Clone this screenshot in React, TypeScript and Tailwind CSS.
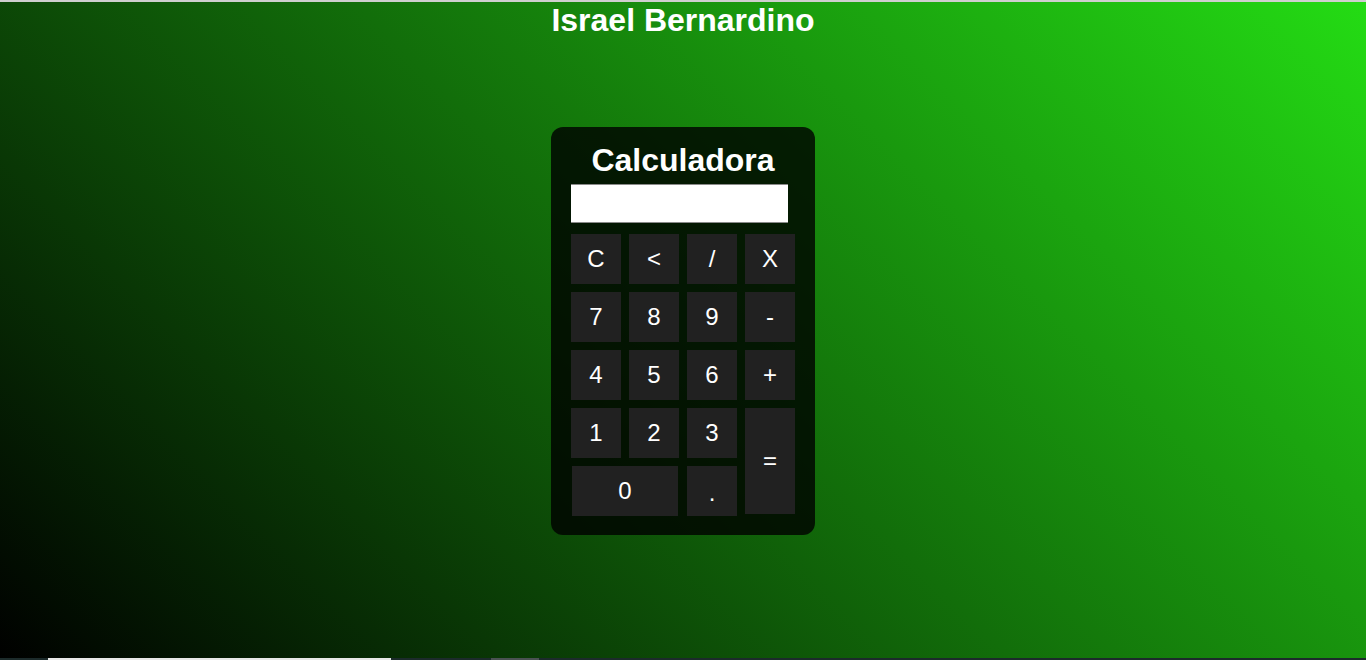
import React from "react";

const btn =
  "bg-[#212121] text-white text-[24px] flex items-center justify-center leading-none select-none";

export default function App() {
  const rows: string[][] = [
    ["C", "<", "/", "X"],
    ["7", "8", "9", "-"],
    ["4", "5", "6", "+"],
  ];
  return (
    <div
      className="w-full h-[660px] flex flex-col overflow-hidden bg-[linear-gradient(45deg,#000000,#24dc14)]"
      style={{ fontFamily: '"Liberation Sans", Arial, sans-serif' }}
    >
      <div className="h-[2px] bg-[#cfcfcf] shrink-0" />
      <div className="flex-1 flex flex-col items-center">
        <h1 className="text-[32px] font-bold text-white leading-[37px] m-0">
          Israel Bernardino
        </h1>
        <div className="mt-[88px] w-[264px] h-[408px] bg-black/80 rounded-[12px] flex flex-col pt-[15px] px-[20px]">
          <h2 className="text-[32px] font-bold text-white leading-[37px] text-center m-0">
            Calculadora
          </h2>
          <div className="mt-[5px] w-[217px] h-[39px] bg-white border-t border-b border-[#8a8a8a]" />
          <div className="mt-[11px] grid grid-cols-[50px_50px_50px_50px] auto-rows-[50px] gap-[8px]">
            {rows.map((r) =>
              r.map((k) => (
                <div key={k} className={btn}>
                  {k}
                </div>
              ))
            )}
            <div className={btn}>1</div>
            <div className={btn}>2</div>
            <div className={btn}>3</div>
            <div className={`${btn} row-span-2 h-[106px]`}>=</div>
            <div className={`${btn} col-span-2 ml-[1px] w-[106px]`}>0</div>
            <div className={`${btn} pt-[4px]`}>.</div>
          </div>
        </div>
      </div>
      <div className="h-[2px] shrink-0 flex bg-[#1c2b2b]">
        <div className="w-[48px]" />
        <div className="w-[343px] bg-[#e8e8e8]" />
        <div className="w-[100px]" />
        <div className="w-[48px] bg-[#4a5252]" />
      </div>
    </div>
  );
}
